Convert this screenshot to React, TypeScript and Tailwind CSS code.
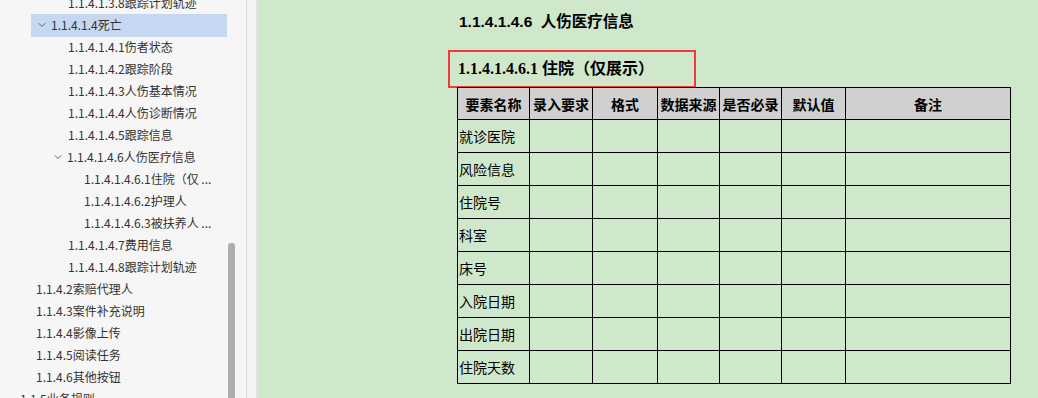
import React from "react";
import { ChevronDown } from "lucide-react";

type Item = { t: string; pad: string; chevron?: boolean; selected?: boolean };

const items: Item[] = [
  { t: "1.1.4.1.3.8跟踪计划轨迹", pad: "pl-[68px]" },
  { t: "1.1.4.1.4死亡", pad: "pl-[5px]", chevron: true, selected: true },
  { t: "1.1.4.1.4.1伤者状态", pad: "pl-[68px]" },
  { t: "1.1.4.1.4.2跟踪阶段", pad: "pl-[68px]" },
  { t: "1.1.4.1.4.3人伤基本情况", pad: "pl-[68px]" },
  { t: "1.1.4.1.4.4人伤诊断情况", pad: "pl-[68px]" },
  { t: "1.1.4.1.4.5跟踪信息", pad: "pl-[68px]" },
  { t: "1.1.4.1.4.6人伤医疗信息", pad: "pl-[52px]", chevron: true },
  { t: "1.1.4.1.4.6.1住院（仅 ...", pad: "pl-[84px]" },
  { t: "1.1.4.1.4.6.2护理人", pad: "pl-[84px]" },
  { t: "1.1.4.1.4.6.3被扶养人 ...", pad: "pl-[84px]" },
  { t: "1.1.4.1.4.7费用信息", pad: "pl-[68px]" },
  { t: "1.1.4.1.4.8跟踪计划轨迹", pad: "pl-[68px]" },
  { t: "1.1.4.2索赔代理人", pad: "pl-[36px]" },
  { t: "1.1.4.3案件补充说明", pad: "pl-[36px]" },
  { t: "1.1.4.4影像上传", pad: "pl-[36px]" },
  { t: "1.1.4.5阅读任务", pad: "pl-[36px]" },
  { t: "1.1.4.6其他按钮", pad: "pl-[36px]" },
  { t: "1.1.5业务规则", pad: "pl-[20px]" },
];

const rows = ["就诊医院", "风险信息", "住院号", "科室", "床号", "入院日期", "出院日期", "住院天数"];
const headers = ["要素名称", "录入要求", "格式", "数据来源", "是否必录", "默认值", "备注"];
const widths = [72, 63, 65, 62, 62, 64, 165];

function Sidebar() {
  return (
    <div className="relative w-[246px] shrink-0 h-full bg-[#f6f6f6] overflow-hidden font-['Noto_Sans_CJK_SC',sans-serif] text-[12px] text-[#333]">
      <div className="mt-[-8px] flex flex-col">
        {items.map((it, i) =>
          it.selected ? (
            <div key={i} className="h-[22px] flex items-center">
              <div className={`ml-[31px] w-[196px] h-[23px] flex items-center bg-[#c6d8f1] ${it.pad}`}>
                <ChevronDown size={12} strokeWidth={1.6} className="text-[#444] mr-[3px]" />
                <span className="whitespace-nowrap">{it.t}</span>
              </div>
            </div>
          ) : (
            <div key={i} className={`h-[22px] flex items-center ${it.pad}`}>
              {it.chevron && <ChevronDown size={12} strokeWidth={1.6} className="text-[#444] mr-[3px]" />}
              <span className="whitespace-nowrap">{it.t}</span>
            </div>
          )
        )}
      </div>
      <div className="absolute left-[228px] top-[243px] w-[7px] h-[200px] rounded-t-[3px] bg-[#adadad]" />
    </div>
  );
}

export default function App() {
  return (
    <div className="w-[1038px] h-[398px] flex overflow-hidden bg-white">
      <Sidebar />
      <div className="w-[1px] h-full bg-[#dedede]" />
      <div className="w-[10px] h-full bg-[#f4f4f4] border-r border-[#e2e2e2]" />
      <div className="flex-1 h-full bg-[#cfe8cc] pl-[191px]">
        <div className="pt-[12px] pl-[11px] h-[20px] box-content flex items-center font-['Liberation_Sans','Noto_Sans_CJK_SC',sans-serif] font-bold text-[15.5px] text-black whitespace-pre leading-[20px]">
          1.1.4.1.4.6  人伤医疗信息
        </div>
        <div className="mt-[18px] w-[248px] h-[38px] border-2 border-[#ef3b3b] flex items-center pl-[8px] font-['Liberation_Serif','Noto_Sans_CJK_SC',serif] font-bold text-[16px] text-black whitespace-pre">
          1.1.4.1.4.6.1 住院（仅展示）
        </div>
        <table className="mt-[-1px] ml-[9px] table-fixed border-collapse w-[553px] font-['Noto_Sans_CJK_SC',sans-serif] text-[14px] text-black">
          <colgroup>
            {widths.map((w, i) => (
              <col key={i} style={{ width: w }} />
            ))}
          </colgroup>
          <thead>
            <tr className="h-[32px] bg-[#d0d0d0]">
              {headers.map((h) => (
                <th key={h} className="border border-black font-bold text-center p-0 leading-none whitespace-nowrap">
                  {h}
                </th>
              ))}
            </tr>
          </thead>
          <tbody>
            {rows.map((r) => (
              <tr key={r} className="h-[33px]">
                <td className="border border-black pl-[1px] p-0 leading-none whitespace-nowrap">{r}</td>
                {widths.slice(1).map((_, j) => (
                  <td key={j} className="border border-black p-0" />
                ))}
              </tr>
            ))}
          </tbody>
        </table>
      </div>
    </div>
  );
}
